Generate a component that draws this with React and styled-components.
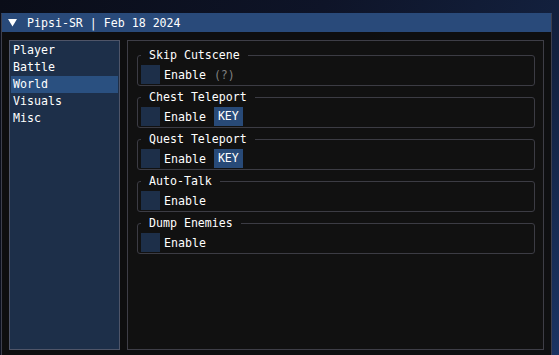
import React from 'react';
import styled, { createGlobalStyle } from 'styled-components';

const GlobalStyle = createGlobalStyle`
  html, body {
    margin: 0;
    height: 100%;
    overflow: hidden;
  }
  body {
    background: linear-gradient(115deg, #0a0d18 0%, #0e1428 45%, #13213f 80%, #1b3463 100%);
    font-family: "DejaVu Sans Mono", "Liberation Mono", monospace;
    font-size: 11.6px;
    color: #ffffff;
  }
`;

const Window = styled.div`
  margin: 13px 0 0 1px;
  width: 551px;
  height: 346px;
  box-sizing: border-box;
  border: 1px solid #3d3f4c;
  border-top-color: #294a7a;
  background: rgba(15, 15, 15, 0.96);
`;

const TitleBar = styled.div`
  height: 18px;
  display: flex;
  align-items: center;
  gap: 10px;
  padding-left: 6px;
  background: #294a7a;
  white-space: pre;
`;

const Body = styled.div`
  display: flex;
  gap: 7px;
  padding: 8px 7px 0;
`;

const ListBox = styled.div`
  width: 111px;
  height: 310px;
  box-sizing: border-box;
  border: 1px solid #4f5568;
  background: #1d2f49;
  padding: 1px 1px 0;
`;

const ListItem = styled.div`
  height: 17px;
  line-height: 17px;
  padding-left: 2px;
  background: ${p => (p.selected ? '#2a5080' : 'transparent')};
`;

const Child = styled.div`
  width: 417px;
  height: 310px;
  box-sizing: border-box;
  border: 1px solid #3e3e47;
  background: #111111;
  padding: 7px 8px 0 9px;
`;

const Group = styled.fieldset`
  margin: 0 0 4px;
  min-width: 0;
  border: 1px solid #3c3c44;
  border-radius: 3px;
  padding: 2px 3px 1px;
`;

const GroupTitle = styled.legend`
  padding: 0 8px;
  line-height: 15px;
`;

const Row = styled.div`
  display: flex;
  align-items: center;
  gap: 8px;
  height: 19px;
`;

const CheckLabel = styled.label`
  display: flex;
  align-items: center;
  gap: 4px;
`;

const Box = styled.span`
  width: 19px;
  height: 19px;
  background: #1d2f49;
`;

const KeyButton = styled.span`
  height: 19px;
  line-height: 19px;
  padding: 0 4px;
  background: #284a78;
`;

const Hint = styled.span`
  color: #808080;
`;

const Arrow = () => (
  <svg width="9" height="8" viewBox="0 0 9 8">
    <polygon points="0,0 9,0 4.5,7.5" fill="#ffffff" />
  </svg>
);

const tabs = ['Player', 'Battle', 'World', 'Visuals', 'Misc'];

const features = [
  { name: 'Skip Cutscene', hint: true },
  { name: 'Chest Teleport', hotkey: true },
  { name: 'Quest Teleport', hotkey: true },
  { name: 'Auto-Talk' },
  { name: 'Dump Enemies' }
];

export default function App () {
  return (
    <>
      <GlobalStyle />
      <Window>
        <TitleBar>
          <Arrow />
          <span>Pipsi-SR | Feb 18 2024</span>
        </TitleBar>
        <Body>
          <ListBox>
            {tabs.map(t => (
              <ListItem key={t} selected={t === 'World'}>{t}</ListItem>
            ))}
          </ListBox>
          <Child>
            {features.map(f => (
              <Group key={f.name}>
                <GroupTitle>{f.name}</GroupTitle>
                <Row>
                  <CheckLabel>
                    <Box />
                    <span>Enable</span>
                  </CheckLabel>
                  {f.hint && <Hint>(?)</Hint>}
                  {f.hotkey && <KeyButton>KEY</KeyButton>}
                </Row>
              </Group>
            ))}
          </Child>
        </Body>
      </Window>
    </>
  );
}
